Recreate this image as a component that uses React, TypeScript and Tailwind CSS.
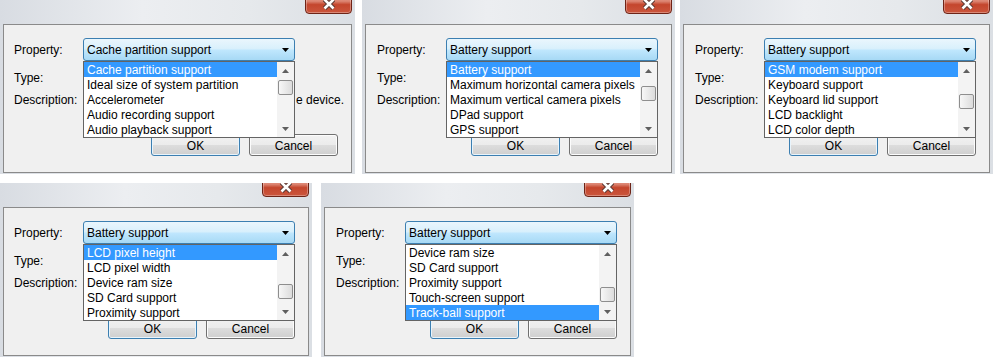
type Panel = {
  wrap: string
  body: string
  value: string
  items: string[]
  selected: number
  thumb: string
  tail: string
}

const PANELS_TOP: Panel[] = [
  {
    wrap: "w-[355px]",
    body: "w-[349px] pl-[10px]",
    value: "Cache partition support",
    items: [
      "Cache partition support",
      "Ideal size of system partition",
      "Accelerometer",
      "Audio recording support",
      "Audio playback support",
    ],
    selected: 0,
    thumb: "mt-[1px]",
    tail: "e device.",
  },
  {
    wrap: "w-[313px] ml-[7px]",
    body: "w-[307px] pl-[11px]",
    value: "Battery support",
    items: [
      "Battery support",
      "Maximum horizontal camera pixels",
      "Maximum vertical camera pixels",
      "DPad support",
      "GPS support",
    ],
    selected: 0,
    thumb: "mt-[7px]",
    tail: "",
  },
  {
    wrap: "w-[313px] ml-[5px]",
    body: "w-[307px] pl-[11px]",
    value: "Battery support",
    items: [
      "GSM modem support",
      "Keyboard support",
      "Keyboard lid support",
      "LCD backlight",
      "LCD color depth",
    ],
    selected: 0,
    thumb: "mt-[15px]",
    tail: "",
  },
]

const PANELS_BOTTOM: Panel[] = [
  {
    wrap: "w-[312px]",
    body: "w-[306px] pl-[10px]",
    value: "Battery support",
    items: [
      "LCD pixel height",
      "LCD pixel width",
      "Device ram size",
      "SD Card support",
      "Proximity support",
    ],
    selected: 0,
    thumb: "mt-[22px]",
    tail: "",
  },
  {
    wrap: "w-[313px] ml-[9px]",
    body: "w-[307px] pl-[11px]",
    value: "Battery support",
    items: [
      "Device ram size",
      "SD Card support",
      "Proximity support",
      "Touch-screen support",
      "Track-ball support",
    ],
    selected: 4,
    thumb: "mt-[25px]",
    tail: "",
  },
]

function CloseButton() {
  return (
    <div className="mt-[-7px] flex h-[21px] w-[47px] shrink-0 items-center justify-center rounded-[4px] border border-[#6e2417] bg-[linear-gradient(to_bottom,#eaa597_0%,#dc8572_38%,#c4462d_56%,#cb563d_100%)] shadow-[inset_0_0_0_1px_rgba(255,255,255,0.3)]">
      <svg width="14" height="12" viewBox="0 0 14 12">
        <path d="M2.5 1.5 L11.5 10.5 M11.5 1.5 L2.5 10.5" stroke="#5a3a35" strokeWidth="4.6" />
        <path d="M2.5 1.5 L11.5 10.5 M11.5 1.5 L2.5 10.5" stroke="#ffffff" strokeWidth="2.6" />
      </svg>
    </div>
  )
}

function Arrow({ down }: { down?: boolean }) {
  return (
    <div className="flex h-[17px] items-center justify-center">
      <svg width="7" height="4" viewBox="0 0 7 4">
        <polygon points={down ? "0,0 7,0 3.5,4" : "0,4 7,4 3.5,0"} fill="#5f5f5f" />
      </svg>
    </div>
  )
}

function DropList({ p }: { p: Panel }) {
  return (
    <div className="absolute left-0 top-[23px] z-10 flex h-[77px] w-[212px] border border-[#646464] bg-white">
      <div className="flex-1">
        {p.items.map((item, i) => (
          <div
            key={item}
            className={
              i === p.selected
                ? "h-[15px] whitespace-nowrap bg-[#3399ff] pl-[3px] leading-[17px] text-white"
                : "h-[15px] whitespace-nowrap pl-[3px] leading-[17px] text-black"
            }
          >
            {item}
          </div>
        ))}
      </div>
      <div className="flex w-[17px] flex-col bg-[#f3f3f3]">
        <Arrow />
        <div className="flex-1">
          <div
            className={`${p.thumb} ml-[1px] h-[15px] w-[15px] rounded-[2px] border border-[#8e8e8e] bg-[linear-gradient(to_right,#f7f7f7,#dcdcdc)]`}
          />
        </div>
        <Arrow down />
      </div>
    </div>
  )
}

function Dialog({ p }: { p: Panel }) {
  return (
    <div
      className={`${p.wrap} flex h-[174px] shrink-0 flex-col overflow-hidden bg-[linear-gradient(to_right,#d8dce2_0%,#eceef1_40%,#e6e9ec_70%,#dbdfe4_100%)]`}
    >
      <div className="flex h-[24px] shrink-0 justify-end overflow-hidden pr-[3px]">
        <CloseButton />
      </div>
      <div className={`${p.body} ml-[3px] h-[149px] border border-[#8a8a8a] bg-[#f0f0f0] pr-[13px] pt-[13px]`}>
        <div className="flex items-center">
          <div className="w-[69px] shrink-0 pt-[2px]">Property:</div>
          <div className="relative h-[23px] w-[212px] shrink-0">
            <div className="flex h-[23px] w-[212px] items-center justify-between rounded-[3px] border border-[#3c7fb1] bg-[linear-gradient(to_bottom,#eaf6fd_0%,#d9f0fc_45%,#bee6fd_55%,#a7d9f5_100%)] pl-[3px] pr-[5px]">
              <span className="whitespace-nowrap pt-[2px]">{p.value}</span>
              <svg width="7" height="4" viewBox="0 0 7 4">
                <polygon points="0,0 7,0 3.5,4" fill="#000000" />
              </svg>
            </div>
            <DropList p={p} />
          </div>
        </div>
        <div className="mt-[10px] flex h-[15px] items-center">
          <div className="w-[69px] shrink-0">Type:</div>
        </div>
        <div className="mt-[7px] flex h-[15px] items-center">
          <div className="w-[69px] shrink-0">Description:</div>
          <div className="w-[212px] shrink-0" />
          <span className="whitespace-nowrap pl-[1px]">{p.tail}</span>
        </div>
        <div className="mt-[26px] flex justify-end gap-[9px]">
          <div className="flex h-[22px] w-[89px] items-center justify-center rounded-[3px] border border-[#3c7fb1] bg-[linear-gradient(to_bottom,#f2f2f2_0%,#ebebeb_50%,#dddddd_50%,#cfcfcf_100%)] pt-[2px] shadow-[inset_0_0_0_1px_#e8f4fc]">
            OK
          </div>
          <div className="flex h-[22px] w-[89px] items-center justify-center rounded-[3px] border border-[#707070] bg-[linear-gradient(to_bottom,#f2f2f2_0%,#ebebeb_50%,#dddddd_50%,#cfcfcf_100%)] pt-[2px] shadow-[inset_0_0_0_1px_#fcfcfc]">
            Cancel
          </div>
        </div>
      </div>
    </div>
  )
}

export default function App() {
  return (
    <div className="h-[363px] w-[997px] overflow-hidden bg-white font-['Liberation_Sans',Arial,sans-serif] text-[12px] leading-[15px] text-black">
      <div className="flex h-[174px]">
        {PANELS_TOP.map((p, i) => (
          <Dialog key={i} p={p} />
        ))}
      </div>
      <div className="mt-[9px] flex h-[174px]">
        {PANELS_BOTTOM.map((p, i) => (
          <Dialog key={i} p={p} />
        ))}
      </div>
    </div>
  )
}
